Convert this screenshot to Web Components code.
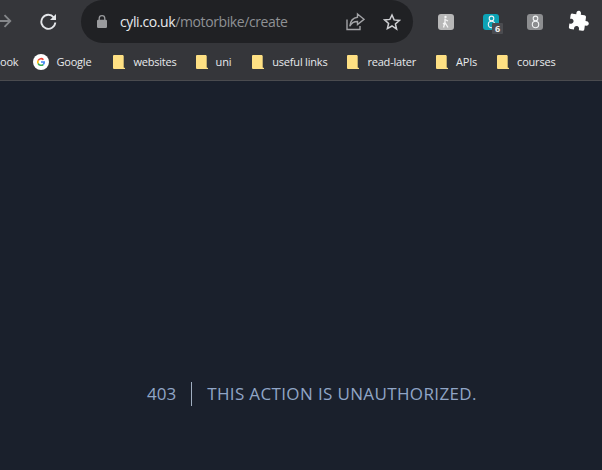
<!DOCTYPE html>
<html lang="en"><head><meta charset="utf-8"><title>403</title>
<style>
html,body{margin:0;height:100%;background:#1a202c}
body{width:602px;height:470px;overflow:hidden;display:flex;flex-direction:column;font-family:"Open Sans","Noto Sans",sans-serif}
</style></head><body>
<browser-toolbar url-host="cyli.co.uk" url-path="/motorbike/create"></browser-toolbar>
<bookmark-bar>
  <bookmark-item kind="none" style="margin-right:15px">ook</bookmark-item>
  <bookmark-item kind="google" style="margin-right:22px">Google</bookmark-item>
  <bookmark-item style="margin-right:19px">websites</bookmark-item>
  <bookmark-item style="margin-right:21px">uni</bookmark-item>
  <bookmark-item style="margin-right:20px">useful links</bookmark-item>
  <bookmark-item style="margin-right:20px">read-later</bookmark-item>
  <bookmark-item style="margin-right:20px">APIs</bookmark-item>
  <bookmark-item>courses</bookmark-item>
</bookmark-bar>
<error-page code="403" message="This action is unauthorized."></error-page>
<script>
const def=(n,html)=>customElements.define(n,class extends HTMLElement{
  connectedCallback(){ if(this.shadowRoot) return; const r=this.attachShadow({mode:'open'}); r.innerHTML=html(this); }
});
const eight=`<svg width="9" height="14" viewBox="0 0 9 14" fill="none" stroke="#f2f4f5" stroke-width="1.100"><circle cx="4.500" cy="3.400" r="2.300"/><circle cx="4.500" cy="9.500" r="3.200"/></svg>`;
def('browser-toolbar',el=>`<style>
:host{display:flex;align-items:flex-start;height:44px;background:#35363a;flex:none}
svg{display:block;flex:none}
.back{margin:14px 0 0 0}
.reload{margin:13px 0 0 28px}
.omni{margin-left:24px;width:332px;height:43px;border-radius:22px;background:#202124;display:flex;align-items:center;box-sizing:border-box;padding-left:16px;flex:none}
.url{margin-left:13px;font:14px/20px "Open Sans",sans-serif;letter-spacing:-.4px;color:#8f9195;width:207px;white-space:nowrap}
.url b{font-weight:400;color:#e8eaed}
.share{margin-left:19px}.star{margin-left:18px}
.ext{margin-top:14px;width:16px;height:16px;border-radius:3px;display:flex;align-items:center;justify-content:center;position:relative;flex:none}
.badge{position:absolute;left:9px;top:9px;width:11px;height:11px;background:#4b4c50;color:#f4f4f4;font:bold 9px/11px "Open Sans",sans-serif;text-align:center;border-radius:1px}
</style>
<svg class="back" width="12" height="14" viewBox="0 0 12 14" fill="none" stroke="#85878a" stroke-width="1.800"><path d="M0 7h10M4.500 1.200 10.300 7l-5.800 5.800"/></svg>
<svg class="reload" width="17" height="17" viewBox="0 0 17 17" fill="none"><path d="M13.700 4.300A7 7 0 1 0 15.300 9.500" stroke="#e4e6e9" stroke-width="1.900"/><path d="M16 1v6h-6z" fill="#e4e6e9"/></svg>
<div class="omni">
  <svg width="10" height="13" viewBox="0 0 10 13"><path d="M2.200 5V3.500a2.800 2.800 0 0 1 5.600 0V5" fill="none" stroke="#9a9b9e" stroke-width="1.300"/><rect y="4.700" width="10" height="8.300" rx="1.200" fill="#9a9b9e"/></svg>
  <div class="url"><b>${el.getAttribute('url-host')}</b>${el.getAttribute('url-path')}</div>
  <svg class="share" width="19" height="19" viewBox="0 0 19 19" fill="none" stroke="#a3a4a7" stroke-width="1.400"><path d="M1 7.500V17.500H14V14"/><path d="M11.500 2 18 7.300l-6.500 5.200V9.500C8 9.500 5.500 10.800 3.800 14.300 4.300 9.300 7 5.700 11.500 5.200z"/></svg>
  <svg class="star" width="18" height="18" viewBox="0 0 18 18" fill="none" stroke="#cfd0d3" stroke-width="1.500"><path d="M9 2l2.100 4.900 5.300.5-4 3.500 1.200 5.200L9 13l-4.600 2.600 1.200-5.200-4-3.500 5.300-.5z"/></svg>
</div>
<div class="ext" style="margin-left:25px;background:#b7b7b7"><svg width="12" height="14" viewBox="0 0 12 14" fill="none" stroke="#f4f4f4" stroke-width="1.300"><path d="M5 3.500v4L3 9M5 4.500l3 1.500M5 7.500l3 5M5 7.500l-1.500 5"/><circle cx="5.500" cy="2" r="1.200" fill="#f4f4f4" stroke="none"/></svg></div>
<div class="ext" style="margin-left:29px;background:#0ca3b5">${eight}<span class="badge">6</span></div>
<div class="ext" style="margin-left:28px;background:#8d8e90">${eight}</div>
<svg style="margin:10px 0 0 25px" width="22" height="22" viewBox="0 0 24 24"><path transform="rotate(8 12 12)" fill="#fff" d="M20.500 11H19V7c0-1.100-.9-2-2-2h-4V3.500C13 2.120 11.880 1 10.500 1S8 2.120 8 3.500V5H4c-1.100 0-1.990.9-1.990 2v3.800H3.500c1.490 0 2.700 1.210 2.700 2.700s-1.210 2.700-2.700 2.700H2V20c0 1.100.9 2 2 2h3.800v-1.500c0-1.490 1.210-2.700 2.700-2.700 1.490 0 2.700 1.210 2.700 2.700V22H17c1.100 0 2-.9 2-2v-4h1.500c1.380 0 2.500-1.120 2.500-2.500S21.880 11 20.500 11z"/></svg>`);
def('bookmark-bar',()=>`<style>
:host{display:flex;align-items:center;height:36px;background:#35363a;border-bottom:1px solid #4a4b4f;flex:none;white-space:nowrap}
</style><slot></slot>`);
def('bookmark-item',el=>{
 const k=el.getAttribute('kind');
 const icon = k==='none'?'' : k==='google' ? `<svg width="16" height="16" viewBox="0 0 16 16"><circle cx="8" cy="8" r="8" fill="#fff"/><path d="M11 5.200A4 4 0 0 0 4.500 6l1.300 1a2.500 2.500 0 0 1 4-.8z" fill="#ea4335"/><path d="M4.500 6a4 4 0 0 0 0 4l1.300-1a2.500 2.500 0 0 1 0-2z" fill="#fbbc05"/><path d="M4.500 10a4 4 0 0 0 6.400.900L9.700 10a2.500 2.500 0 0 1-3.900-1z" fill="#34a853"/><path d="M10.900 10.900A4 4 0 0 0 12 7.300H8v1.500h2.300a2 2 0 0 1-.6 1.200z" fill="#4285f4"/></svg>`
 : `<svg width="12" height="14" viewBox="0 0 12 14"><path d="M1 0h9l.7.900V12.500l1.300.6V14H1a1 1 0 0 1-1-1V1a1 1 0 0 1 1-1z" fill="#fee083"/></svg>`;
 return `<style>:host{display:inline-flex;align-items:center;gap:${k==='google'?7:8}px;font:11px/16px "Open Sans",sans-serif;letter-spacing:-.2px;color:#e8eaed}svg{display:block;flex:none}</style>${icon}<slot></slot>`;
});
def('error-page',el=>`<style>
:host{flex:1;display:flex;align-items:flex-end;background:#1a202c;box-sizing:border-box;padding:0 0 64px 147px;font-family:"Open Sans",sans-serif;color:#90a5c6}
.code{font-size:17px;line-height:24px;padding-right:15px;border-right:1px solid #a0aec0}
.msg{margin-left:15px;font-size:17px;line-height:24px;letter-spacing:.36px;text-transform:uppercase;white-space:nowrap}
</style><div class="code">${el.getAttribute('code')}</div><div class="msg">${el.getAttribute('message')}</div>`);
</script>
</body></html>
